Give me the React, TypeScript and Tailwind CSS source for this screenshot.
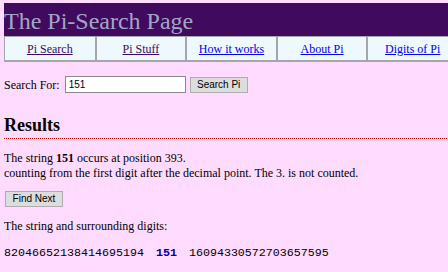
const navItems = [
  { label: 'Pi Search', visited: true },
  { label: 'Pi Stuff', visited: true },
  { label: 'How it works', visited: false },
  { label: 'About Pi', visited: false },
  { label: 'Digits of Pi', visited: false },
];

export default function App() {
  return (
    <div className="w-[448px] h-[272px] overflow-hidden bg-[#ffdcff]">
      <div className="w-[457px] pl-[4px] pt-[3px] font-['Liberation_Serif',serif] text-[12px] text-black">
        {/* title bar */}
        <div className="h-[33px] bg-[#400a5e]">
          <h1 className="text-[24px] leading-normal text-[#a2a6c6]">The Pi-Search Page</h1>
        </div>

        {/* nav table */}
        <div className="grid grid-cols-5 h-[26px] bg-[#eef8ff] border-t border-b-2 border-[#a6a6a6]">
          {navItems.map((item, i) => (
            <div
              key={item.label}
              className={`flex items-center justify-center border-[#a6a6a6] ${i === 0 ? 'border-l' : 'border-l-2'}`}
            >
              <a
                href="#"
                className={`underline ${item.visited ? 'text-[#3c0860]' : 'text-[#0000ee]'}`}
              >
                {item.label}
              </a>
            </div>
          ))}
        </div>

        {/* search form */}
        <div className="flex items-center mt-[14px] h-[17px]">
          <span>Search For:</span>
          <input
            defaultValue="151"
            className="ml-[5px] w-[121px] h-[17px] bg-white border border-[#8a8a8a] px-[3px] font-['Liberation_Sans',sans-serif] text-[10px] text-black outline-none"
          />
          <button className="ml-[4px] w-[58px] h-[16px] bg-[#dddddd] border border-[#adadad] font-['Liberation_Sans',sans-serif] text-[10px] text-black leading-none">
            Search Pi
          </button>
        </div>

        {/* results */}
        <h2 className="mt-[22px] text-[18px] font-bold leading-[20px] pb-[3px] border-b border-dotted border-[#cc0000]">
          Results
        </h2>
        <p className="mt-[12px] leading-[15px]">
          The string <b>151</b> occurs at position 393.
          <br />
          counting from the first digit after the decimal point. The 3. is not counted.
        </p>

        <button className="mt-[10px] ml-[1px] w-[58px] h-[16px] bg-[#dddddd] border border-[#adadad] font-['Liberation_Sans',sans-serif] text-[10px] text-black leading-none">
          Find Next
        </button>

        <p className="mt-[12px] leading-[15px]">The string and surrounding digits:</p>

        <div className="mt-[12px] font-['Liberation_Mono',monospace] text-[11.67px] leading-[15px] whitespace-pre">
          82046652138414695194
          <b className="mx-[12px] text-[#000099]">151</b>
          16094330572703657595
        </div>
      </div>
    </div>
  );
}
